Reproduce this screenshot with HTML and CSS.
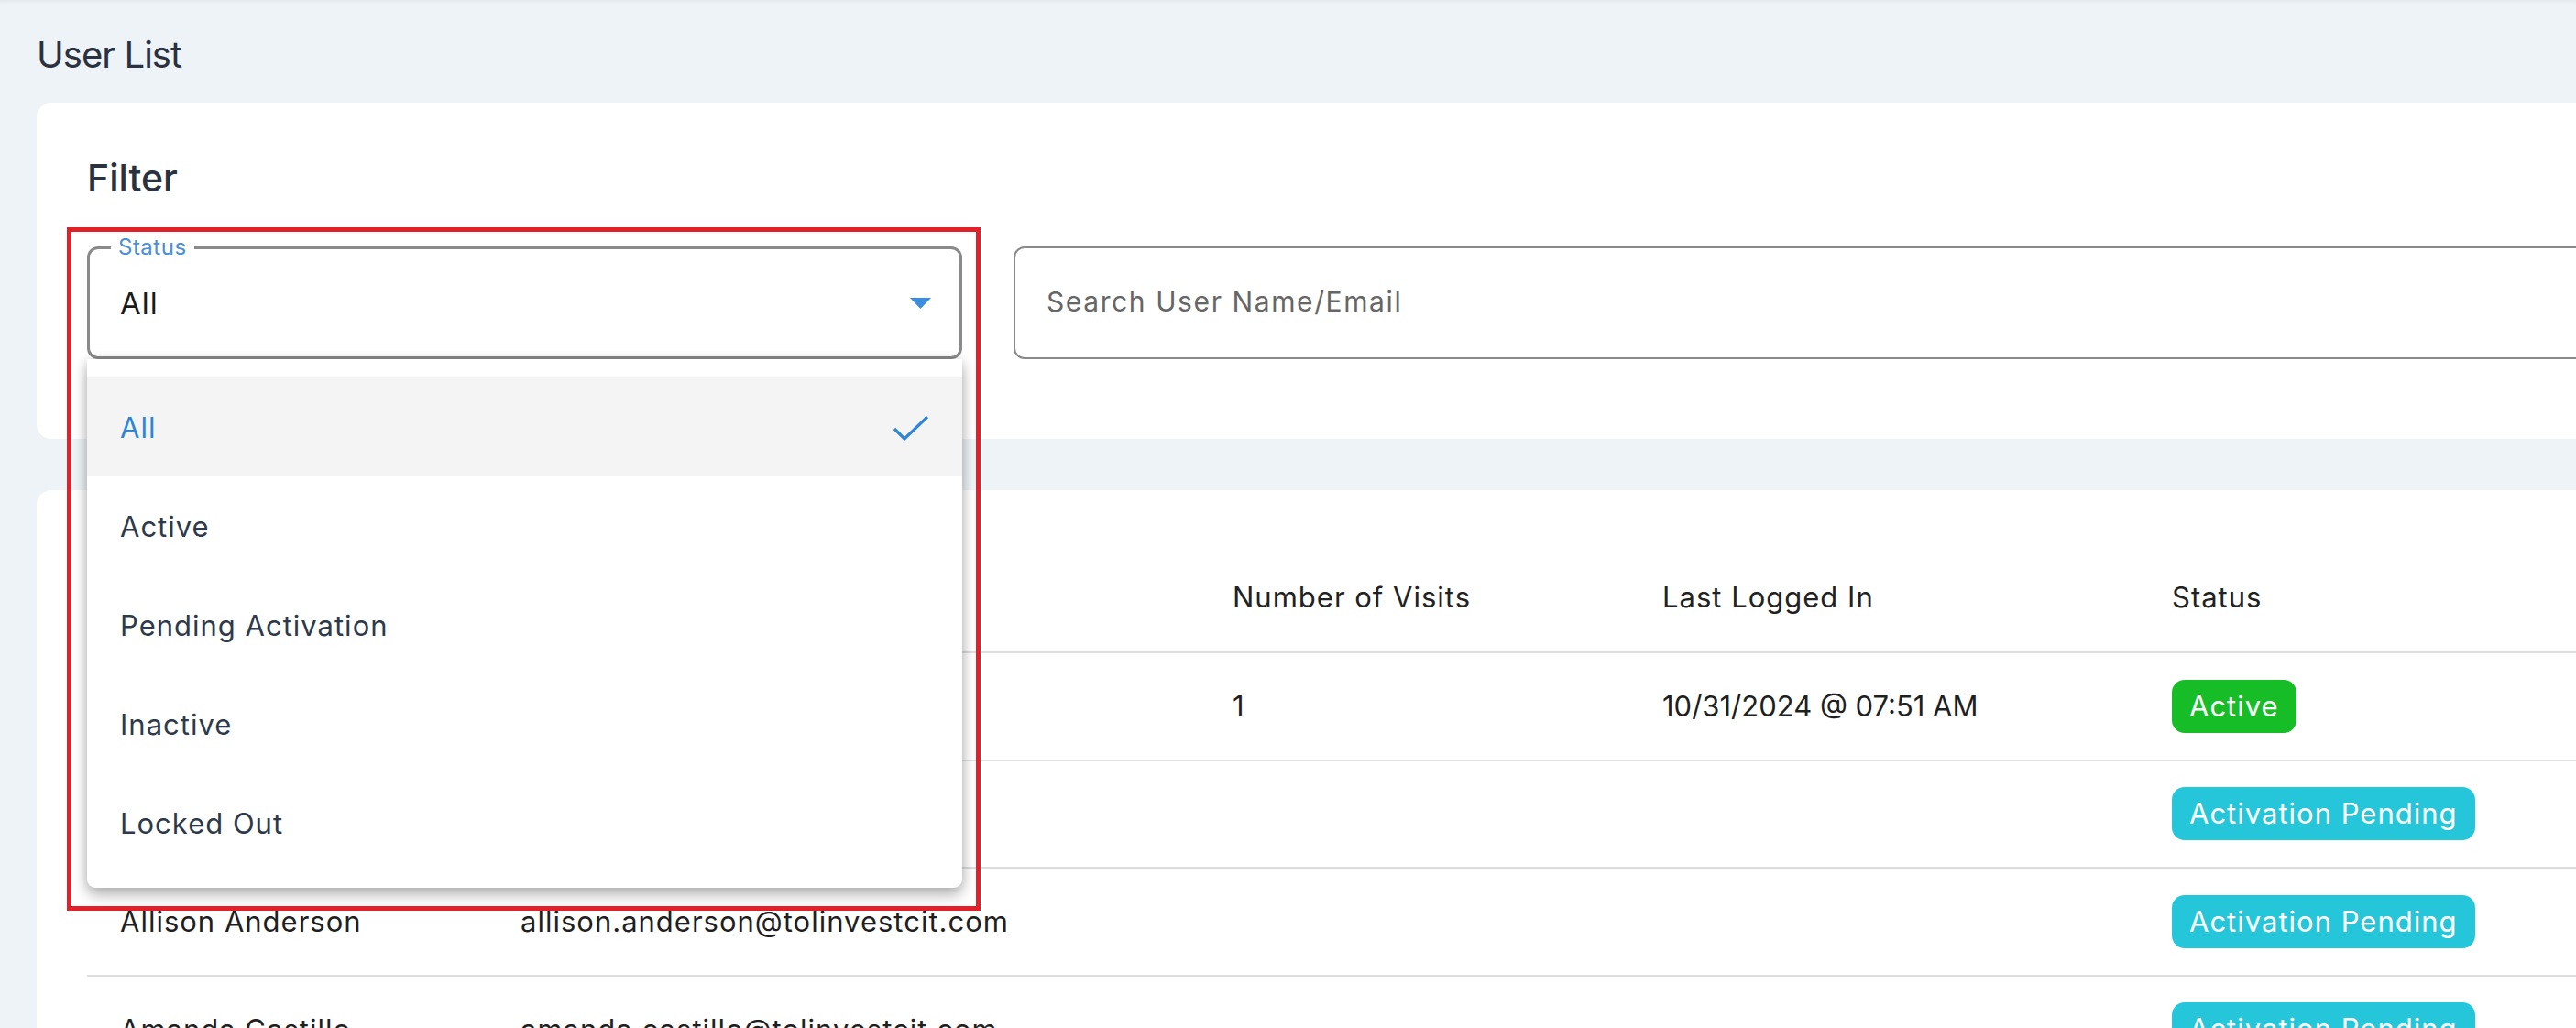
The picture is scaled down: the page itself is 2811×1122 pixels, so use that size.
FILE: index.html
```html
<!DOCTYPE html>
<html lang="en">
<head>
<meta charset="utf-8">
<title>User List</title>
<link rel="stylesheet" href="styles.css">
</head>
<body>
<div class="page">
  <h1 class="page-title">User List</h1>

  <section class="card filter-card">
    <h2 class="card-title">Filter</h2>
    <div class="filter-row">
      <div class="select-wrap">
        <div class="select">
          <span class="select-label">Status</span>
          <span class="select-value">All</span>
          <svg class="caret" width="23" height="12" viewBox="0 0 23 12"><polygon points="0,0 23,0 11.5,12" fill="#3a8ee0"/></svg>
        </div>
        <ul class="menu">
          <li class="menu-item selected"><span>All</span>
            <svg class="check" width="40" height="28" viewBox="0 0 40 28"><polyline points="2,15 13,26 38,2" fill="none" stroke="#2f86d6" stroke-width="3.2"/></svg>
          </li>
          <li class="menu-item"><span>Active</span></li>
          <li class="menu-item"><span>Pending Activation</span></li>
          <li class="menu-item"><span>Inactive</span></li>
          <li class="menu-item"><span>Locked Out</span></li>
        </ul>
        <div class="annotation"></div>
      </div>
      <div class="search">Search User Name/Email</div>
    </div>
  </section>

  <section class="card table-card">
    <div class="trow thead">
      <div class="cell">User Name</div>
      <div class="cell">Email</div>
      <div class="cell">Number of Visits</div>
      <div class="cell">Last Logged In</div>
      <div class="cell">Status</div>
    </div>
    <div class="trow">
      <div class="cell">Aaron Adams</div>
      <div class="cell">aaron.adams@tolinvest.com</div>
      <div class="cell">1</div>
      <div class="cell cell-date">10/31/2024 @ 07:51 AM</div>
      <div class="cell"><span class="badge badge-active">Active</span></div>
    </div>
    <div class="trow">
      <div class="cell">Alex Allen</div>
      <div class="cell">alex.allen@tolinvest.com</div>
      <div class="cell"></div>
      <div class="cell"></div>
      <div class="cell"><span class="badge badge-pending">Activation Pending</span></div>
    </div>
    <div class="trow">
      <div class="cell">Allison Anderson</div>
      <div class="cell">allison.anderson@tolinvestcit.com</div>
      <div class="cell"></div>
      <div class="cell"></div>
      <div class="cell"><span class="badge badge-pending">Activation Pending</span></div>
    </div>
    <div class="trow">
      <div class="cell">Amanda Castillo</div>
      <div class="cell">amanda.castillo@tolinvestcit.com</div>
      <div class="cell"></div>
      <div class="cell"></div>
      <div class="cell"><span class="badge badge-pending">Activation Pending</span></div>
    </div>
  </section>
</div>
</body>
</html>
```

FILE: styles.css
```css
html, body {
  margin: 0;
  padding: 0;
  overflow: hidden;
}
body {
  background: #edf3f7;
  font-family: Inter, "Open Sans", sans-serif;
  letter-spacing: 1px;
  color: #1f1f1f;
  box-shadow: inset 0 5px 4px -3px rgba(0,0,0,0.05);
  min-height: 1122px;
}
.page {
  width: 2860px;
  padding: 36px 0 0 40px;
}
.page-title {
  margin: 0 0 28px;
  font-size: 40px;
  line-height: 48px;
  font-weight: 400;
  letter-spacing: -1px;
  color: #2a3140;
}
.card {
  background: #fff;
  border-radius: 16px;
}
.filter-card {
  padding: 57px 0 87px 55px;
}
.card-title {
  margin: 0 0 50px;
  font-size: 41px;
  line-height: 50px;
  font-weight: 500;
  letter-spacing: 0;
  color: #283241;
}
.filter-row {
  display: flex;
}
.select-wrap {
  position: relative;
  width: 955px;
  flex: none;
}
.select {
  position: relative;
  box-sizing: border-box;
  height: 123px;
  border: 3px solid #8a8a8a;
  border-radius: 12px;
  display: flex;
  align-items: center;
  justify-content: space-between;
  padding: 0 31px 0 33px;
}
.select-label {
  position: absolute;
  top: -14px;
  left: 23px;
  padding: 0 8px;
  background: #fff;
  font-size: 24px;
  line-height: 24px;
  letter-spacing: 0.5px;
  color: #4a90d9;
}
.select-value {
  font-size: 33px;
  color: #1a1a1a;
}
.caret { display: block; }
.menu {
  position: absolute;
  top: 123px;
  left: 0;
  width: 955px;
  box-sizing: border-box;
  margin: 0;
  padding: 20px 0 17px;
  list-style: none;
  background: #fff;
  border-radius: 0 0 9px 9px;
  box-shadow: 0 8px 16px rgba(0,0,0,0.28), 0 0 12px rgba(0,0,0,0.12);
  z-index: 2;
}
.menu-item {
  height: 108px;
  padding: 0 36px;
  display: flex;
  align-items: center;
  justify-content: space-between;
  font-size: 31px;
  color: #2e3a4b;
}
.menu-item.selected {
  background: #f4f4f4;
  color: #2c86d8;
}
.check { display: block; margin-top: 2px; }
.annotation {
  position: absolute;
  top: -21px;
  left: -22px;
  width: 997px;
  height: 746px;
  box-sizing: border-box;
  border: 5px solid #e2202a;
  z-index: 3;
  pointer-events: none;
}
.search {
  flex: 1;
  margin-left: 56px;
  height: 123px;
  box-sizing: border-box;
  border: 2px solid #8a8a8a;
  border-radius: 12px;
  display: flex;
  align-items: center;
  padding: 0 0 4px 34px;
  font-size: 30px;
  letter-spacing: 1.6px;
  color: #666;
}
.table-card {
  margin-top: 56px;
  padding: 60px 0 0 55px;
  min-height: 700px;
}
.trow {
  display: grid;
  grid-template-columns: 437px 777px 469px 556px 1fr;
  height: 117.5px;
  box-sizing: border-box;
  border-bottom: 2px solid #dedede;
  align-items: center;
  font-size: 31px;
  color: #1f1f1f;
}
.thead {
  height: 118px;
  padding-bottom: 4px;
  color: #222;
}
.cell {
  padding-left: 36px;
  white-space: nowrap;
}
.cell-date {
  letter-spacing: 0;
}
.badge {
  display: inline-block;
  height: 58px;
  line-height: 58px;
  padding: 0 19px;
  border-radius: 14px;
  color: #fff;
  font-size: 31px;
}
.badge-active { background: #16bd26; }
.badge-pending { background: #26c6da; }
```
